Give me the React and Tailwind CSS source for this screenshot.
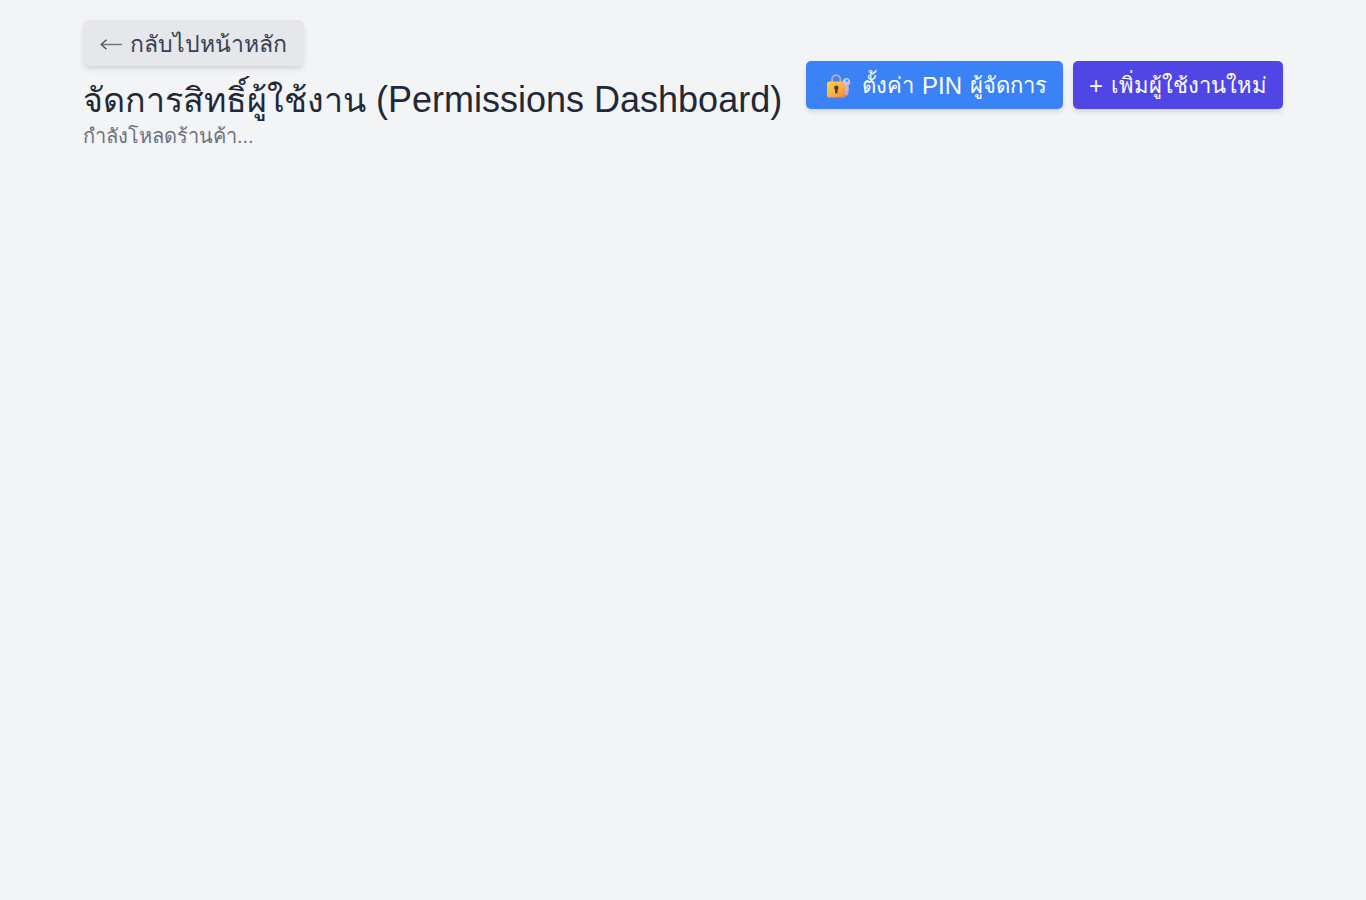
import React from "react";

const ArrowLeftIcon = () => (
  <svg className="h-3 w-[22px] shrink-0" viewBox="0 0 22 12" fill="none" aria-hidden="true">
    <path d="M1.5 6.5H22" stroke="#6b7280" strokeWidth="1.4" />
    <path d="M6.5 1.8 1.2 6.5l5.3 4.7" stroke="#4b5563" strokeWidth="1.5" strokeLinejoin="round" />
  </svg>
);

const LockKeyIcon = () => (
  <svg className="h-[26px] w-[26px] shrink-0" viewBox="0 0 26 26" fill="none" aria-hidden="true">
    <defs>
      <linearGradient id="lockBody" x1="2" y1="9" x2="17" y2="25" gradientUnits="userSpaceOnUse">
        <stop stopColor="#ffcb45" />
        <stop offset="0.5" stopColor="#fdb440" />
        <stop offset="1" stopColor="#f5863c" />
      </linearGradient>
      <linearGradient id="keyBody" x1="17" y1="6" x2="24" y2="22" gradientUnits="userSpaceOnUse">
        <stop stopColor="#d4cbe6" />
        <stop offset="1" stopColor="#b3a5cf" />
      </linearGradient>
    </defs>
    <path d="M6 11V6.5a4.2 4.2 0 0 1 8.4 0V11" stroke="#b3aeba" strokeWidth="1.9" />
    <rect x="1" y="8.5" width="18.5" height="16" rx="1.8" fill="url(#lockBody)" />
    <circle cx="10.3" cy="14.7" r="2.2" fill="#493b4c" />
    <path d="M9.1 15h2.4v4.2a1.2 1.2 0 0 1-2.4 0z" fill="#493b4c" />
    <path
      fillRule="evenodd"
      d="M20.4 5a4 4 0 0 1 2 7.4v1.6l.8 1-.8 1.1.8 1.2-.8 1.1v2.8L20.7 23 19 21.3v-8.7A4 4 0 0 1 20.4 5Zm.5 1.6a1.1 1.1 0 1 0 0 2.2 1.1 1.1 0 0 0 0-2.2Z"
      fill="url(#keyBody)"
    />
  </svg>
);

const ActionButton = ({ className, children }) => (
  <button
    type="button"
    className={`flex items-center rounded-[5px] pt-[9px] pb-[7px] text-2xl whitespace-nowrap text-white shadow-md ${className}`}
  >
    {children}
  </button>
);

const PermissionsHeader = ({ status }) => {
  return (
    <header className="flex items-center justify-between">
      <div>
        <button
          type="button"
          className="flex items-center gap-2 rounded-md bg-gray-200 px-[17px] pt-2 pb-1.5 text-[23px] leading-8 text-[#374151] shadow-md"
        >
          <ArrowLeftIcon />
          <span>กลับไปหน้าหลัก</span>
        </button>
        <h1 className="mt-3.5 text-4xl whitespace-nowrap text-[#1f2937]">
          <span className="text-[34px]">จัดการสิทธิ์ผู้ใช้งาน</span> (Permissions Dashboard)
        </h1>
        <p className="mt-0.5 text-xl text-[#6b7280]">{status}</p>
      </div>

      <div className="flex gap-2.5">
        <ActionButton className="gap-2 bg-[#3b82f6] pr-4 pl-5">
          <LockKeyIcon />
          <span className="ml-0.5 text-[22px]">ตั้งค่า</span>
          <span>PIN</span>
          <span className="text-[22px]">ผู้จัดการ</span>
        </ActionButton>
        <ActionButton className="gap-2 bg-[#4f46e5] px-4">
          <span>+</span>
          <span className="text-[22px]">เพิ่มผู้ใช้งานใหม่</span>
        </ActionButton>
      </div>
    </header>
  );
};

export default function App() {
  return (
    <div className="min-h-screen bg-gray-100 px-4 py-5 font-['Liberation_Sans',sans-serif]">
      <div className="mx-auto max-w-[1200px]">
        <PermissionsHeader status="กำลังโหลดร้านค้า..." />
      </div>
    </div>
  );
}
